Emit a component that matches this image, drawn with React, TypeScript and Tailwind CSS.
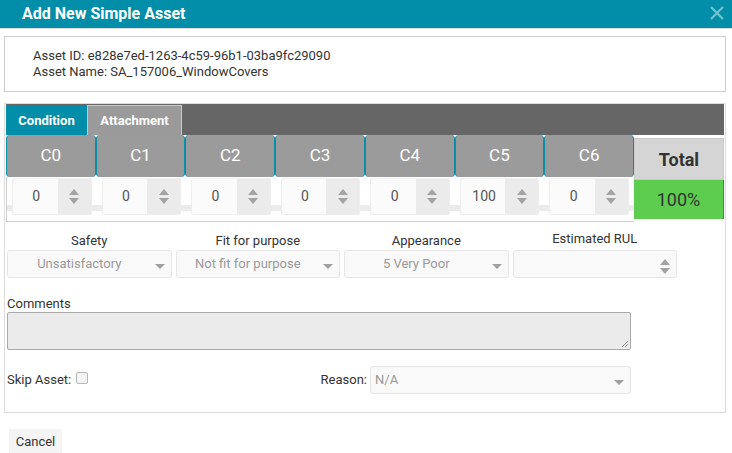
import React from "react";

const Spinner = () => (
  <div className="flex flex-col items-center justify-center gap-[3px]">
    <svg width="10" height="6" viewBox="0 0 10 6"><path d="M0 6 L5 0 L10 6 Z" fill="#a3a3a3" /></svg>
    <svg width="10" height="6" viewBox="0 0 10 6"><path d="M0 0 L5 6 L10 0 Z" fill="#a3a3a3" /></svg>
  </div>
);

const Caret = () => (
  <svg width="10" height="5" viewBox="0 0 10 5"><path d="M0 0 L5 5 L10 0 Z" fill="#a0a0a0" /></svg>
);

const Select = ({ value, left = false }: { value: string; left?: boolean }) => (
  <div className="relative flex h-[28px] items-center rounded-[3px] border border-[#e6e6e6] bg-[#f9f9f9] text-[13px] text-[#999]">
    <span className={left ? "pl-[4px]" : "flex-1 text-center pr-[20px]"}>{value}</span>
    <span className="absolute right-[6px] top-[13px]"><Caret /></span>
  </div>
);

export default function App() {
  const cols = ["C0", "C1", "C2", "C3", "C4", "C5", "C6"];
  const vals = ["0", "0", "0", "0", "0", "100", "0"];
  return (
    <div className="w-[732px] h-[453px] bg-white overflow-hidden" style={{ fontFamily: "Roboto, 'Liberation Sans', sans-serif" }}>
      <div className="flex h-[29px] items-center justify-between border-b border-[#dcdcdc] bg-[#028ea8] pl-[22px] pr-[8px]">
        <span className="text-[16px] font-bold text-white">Add New Simple Asset</span>
        <svg width="14" height="14" viewBox="0 0 14 14" className="mt-[-2px]">
          <path d="M1 1 L13 13 M13 1 L1 13" stroke="#74c2d2" strokeWidth="2.2" />
        </svg>
      </div>

      <div className="ml-[4px] mt-[7px] h-[56px] w-[722px] border border-[#cccccc] pl-[28px] pt-[11px] text-[13px] leading-[16px] text-[#333]">
        <div>Asset ID: e828e7ed-1263-4c59-96b1-03ba9fc29090</div>
        <div>Asset Name: SA_157006_WindowCovers</div>
      </div>

      <div className="ml-[4px] mt-[11px] h-[310px] w-[722px] border border-[#dddddd] px-[1px]">
        <div className="flex h-[31px] items-end bg-[#666666]">
          <div className="flex h-[29px] w-[81px] items-center justify-center bg-[#028ea8] text-[13px] font-bold text-white">Condition</div>
          <div className="flex h-[30px] w-[95px] items-center justify-center border border-b-0 border-[#c8c8c8] bg-[#9a9a9a] text-[13px] font-bold text-white">Attachment</div>
        </div>

        <div className="flex">
          <div className="w-[628px]">
            <div className="grid grid-cols-7">
              {cols.map((c) => (
                <div key={c} className="flex h-[42px] items-center justify-center rounded-[4px] border-x border-[#0b8fa9] bg-[#9b9b9b] text-[17px] text-white">{c}</div>
              ))}
            </div>
            <div className="grid h-[45px] grid-cols-7 border-b border-l border-[#cfcfcf] bg-[linear-gradient(to_bottom,white_28px,#ebebeb_28px,#ebebeb_34px,white_34px)]">
              {vals.map((v, i) => (
                <div key={i} className="px-[5px] pt-[1px]">
                  <div className="flex h-[37px] rounded-[2px] border border-[#eeeeee] bg-[#fbfbfb]">
                    <div className="flex flex-1 items-center justify-center pl-[2px] text-[14px] text-[#555]">{v}</div>
                    <div className="flex w-[33px] items-center justify-center bg-[#ebebeb]"><Spinner /></div>
                  </div>
                </div>
              ))}
            </div>
          </div>
          <div className="mt-[3px] w-[90px]">
            <div className="flex h-[42px] items-center justify-center border border-[#c9c9c9] bg-[#d5d5d5] text-[18px] font-bold text-[#333]">Total</div>
            <div className="flex h-[39px] items-center justify-center border-r border-[#0b8fa9] bg-[#5ccd4f] text-[18px] text-[#333]">100%</div>
          </div>
        </div>

        <div className="ml-[1px] mt-[11px] grid w-[670px] grid-cols-4 gap-x-[4px]">
          {["Safety", "Fit for purpose", "Appearance", "Estimated RUL"].map((l, i) => (
            <div key={l} className={`text-center text-[13px] leading-[16px] text-[#333] ${i === 3 ? "mt-[-2px] mb-[2px]" : ""}`}>{l}</div>
          ))}
          <div className="mt-[1px]"><Select value="Unsatisfactory" /></div>
          <div className="mt-[1px]"><Select value="Not fit for purpose" /></div>
          <div className="mt-[1px]"><Select value="5 Very Poor" /></div>
          <div className="mt-[1px] flex h-[28px] justify-end rounded-[3px] border border-[#e6e6e6] bg-[#f9f9f9] pr-[6px] pt-[4px]">
            <Spinner />
          </div>
        </div>

        <div className="ml-[1px] mt-[18px] text-[13px] leading-[15px] text-[#333]">Comments</div>
        <div className="relative ml-[1px] mt-[1px] h-[38px] w-[624px] rounded-[2px] border border-[#aaaaaa] bg-[#ebebeb]">
          <svg width="8" height="8" viewBox="0 0 8 8" className="absolute bottom-[1px] right-[1px]">
            <path d="M1 7 L7 1 M4 7 L7 4" stroke="#777" strokeWidth="0.8" />
          </svg>
        </div>

        <div className="ml-[1px] mt-[16px] flex w-[624px] items-center">
          <div className="flex w-[360px] items-center text-[13px] text-[#333]">
            <span>Skip Asset:</span>
            <span className="ml-[5px] mt-[-4px] inline-block h-[12px] w-[12px] rounded-[2px] border border-[#b8b8b8] bg-[#f4f4f4]" />
            <span className="ml-auto">Reason:</span>
          </div>
          <div className="ml-[3px] flex-1"><Select value="N/A" left /></div>
        </div>
      </div>

      <div className="ml-[9px] mt-[16px] flex h-[26px] w-[53px] items-center justify-center bg-[#f4f4f4] text-[13px] text-[#333]">Cancel</div>
    </div>
  );
}
